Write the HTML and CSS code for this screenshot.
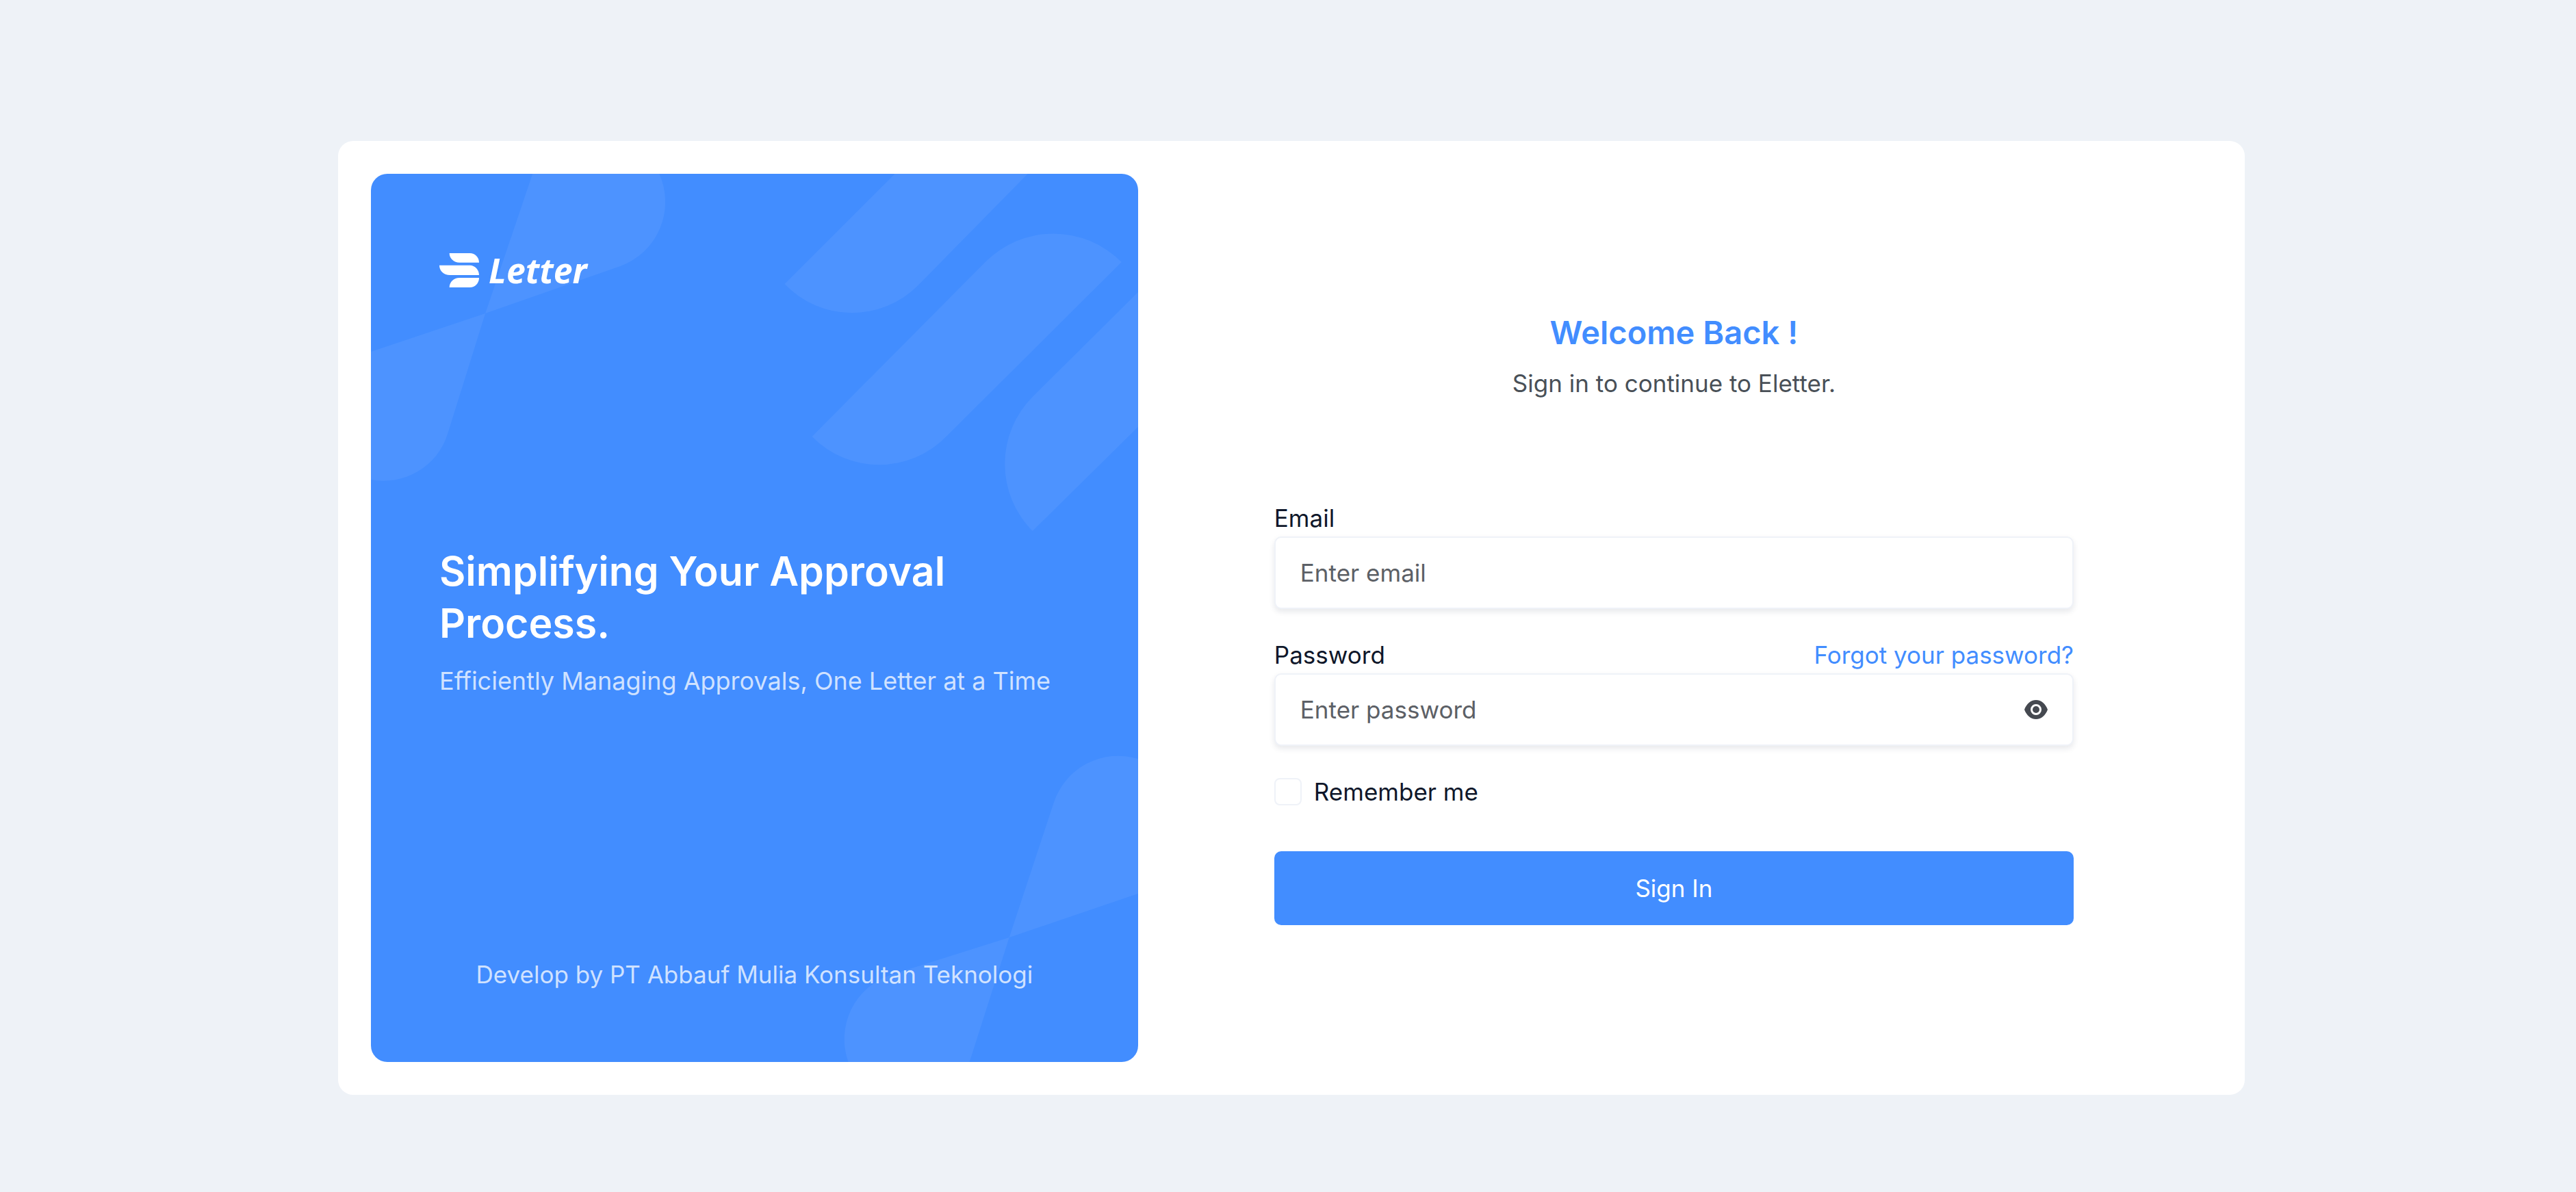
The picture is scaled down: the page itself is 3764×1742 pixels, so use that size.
FILE: index.html
```html
<!DOCTYPE html>
<html lang="en">
<head>
<meta charset="utf-8">
<meta name="viewport" content="width=device-width, initial-scale=1">
<title>Sign In | Eletter</title>
<link rel="stylesheet" href="styles.css">
</head>
<body>
<main class="page">
  <div class="card">
    <section class="promo">
      <svg class="promo-art" viewBox="0 0 1120 1298" preserveAspectRatio="none" aria-hidden="true">
        <path d="M236 0H421A100 100 0 0 1 364 135L167 204Z"/>
        <path d="M0 260L167 204L112 380A98 98 0 0 1 0 447Z"/>
        <path d="M765 0L604 161A136 136 0 0 0 799 163L959 0Z"/>
        <path d="M644 384A137 137 0 0 0 840 384L1096 129A140 140 0 0 0 897 129Z"/>
        <path d="M1120 173L967 325A139 139 0 0 0 966 522L1120 370Z"/>
        <path d="M932 1116L997 919A99 99 0 0 1 1120 855V1052Z"/>
        <path d="M932 1116L758 1171A99 99 0 0 0 697 1298H874Z"/>
      </svg>
      <div class="logo">
        <svg class="logo-mark" viewBox="0 0 174 150" aria-hidden="true">
          <path d="M44 0H134C156 0 174 18 174 41H88C64 41 44 24 44 0Z"/>
          <path d="M0 53H134C156 53 174 73 174 96H46C20 96 0 78 0 53Z"/>
          <path d="M44 150H134C156 150 174 132 174 108H88C64 108 44 126 44 150Z"/>
        </svg>
        <span class="logo-name">Letter</span>
      </div>
      <div class="pitch">
        <h1 class="pitch-title">Simplifying Your Approval Process.</h1>
        <p class="pitch-text">Efficiently Managing Approvals, One Letter at a Time</p>
      </div>
      <p class="credit">Develop by PT Abbauf Mulia Konsultan Teknologi</p>
    </section>
    <section class="signin">
      <header class="welcome">
        <h2 class="welcome-title">Welcome Back !</h2>
        <p class="welcome-text">Sign in to continue to Eletter.</p>
      </header>
      <form class="form">
        <div class="field">
          <div class="field-head"><label for="email">Email</label></div>
          <input class="input" id="email" type="email" placeholder="Enter email">
        </div>
        <div class="field">
          <div class="field-head">
            <label for="password">Password</label>
            <a class="forgot" href="#">Forgot your password?</a>
          </div>
          <div class="password">
            <input class="input" id="password" type="password" placeholder="Enter password">
            <button class="reveal" type="button" aria-label="Show password">
              <svg viewBox="0 0 34 28" aria-hidden="true">
                <path fill-rule="evenodd" d="M17 0C25 0 31 6 34 14C31 22 25 28 17 28C9 28 3 22 0 14C3 6 9 0 17 0ZM17 6A8 8 0 0 0 17 22A8 8 0 0 0 17 6Z"/>
                <circle cx="17" cy="14" r="5"/>
              </svg>
            </button>
          </div>
        </div>
        <div class="remember">
          <input class="check" id="remember" type="checkbox">
          <label for="remember">Remember me</label>
        </div>
        <button class="submit" type="submit">Sign In</button>
      </form>
    </section>
  </div>
</main>
</body>
</html>
```

FILE: styles.css
```css
*, *::before, *::after { box-sizing: border-box; }

body {
  margin: 0;
  background: #eef2f7;
  color: #0f172a;
  font: 400 35px/52px Inter, "Liberation Sans", sans-serif;
}

h1, h2, p { margin: 0; }

.page { padding: 206px 484px 142px 494px; }

.card {
  display: grid;
  grid-template-columns: 5fr 7fr;
  padding: 48px;
  border-radius: 22px;
  background: #fff;
}

/* Blue panel */
.promo {
  position: relative;
  display: flex;
  flex-direction: column;
  justify-content: space-between;
  min-height: 1298px;
  padding: 100px 100px 102px;
  overflow: hidden;
  border-radius: 24px;
  background: #428dff;
  color: #fff;
}

.promo-art {
  position: absolute;
  inset: 0;
  width: 100%;
  height: 100%;
  fill: #fff;
  fill-opacity: .06;
}

.logo, .pitch, .credit { position: relative; }

.logo {
  display: flex;
  align-items: center;
  gap: 14px;
  height: 82px;
}

.logo-mark { width: 58px; height: 50px; fill: #fff; }

.logo-name {
  font: italic 700 50px/72px "Noto Sans", sans-serif;
}

.pitch-title { font-size: 59px; font-weight: 600; line-height: 76px; }
.pitch-text { margin-top: 20px; color: rgba(255, 255, 255, .75); font-size: 36px; }
.credit { margin-top: 16px; color: rgba(255, 255, 255, .75); text-align: center; }

/* Sign-in form */
.signin { padding: 196px 202px 0 199px; }

.welcome { text-align: center; color: #495057; }
.welcome-title { color: #428dff; font-size: 47px; font-weight: 600; line-height: 72px; }
.welcome-text { margin-top: 12px; }

.form { margin-top: 144px; }
.field { margin-bottom: 40px; }
.field-head { display: flex; justify-content: space-between; line-height: 54px; }
.forgot { color: #428dff; text-decoration: none; }

.input {
  display: block;
  width: 100%;
  height: 106px;
  padding: 0 36px;
  border: 2px solid #eff2f8;
  border-radius: 10px;
  background: #fff;
  box-shadow: 0 4px 8px rgba(15, 34, 58, .1);
  color: #495057;
  font: inherit;
}

.input::placeholder { color: #5c6066; opacity: 1; }

.password { display: grid; }
.password > * { grid-area: 1 / 1; }
.password .input { padding-right: 110px; }

.reveal {
  display: flex;
  align-items: center;
  justify-self: end;
  padding: 0 38px;
  border: 0;
  background: none;
}

.reveal svg { width: 34px; height: 28px; fill: #454950; }

.remember { display: flex; align-items: center; gap: 18px; line-height: 54px; }

.check {
  appearance: none;
  width: 40px;
  height: 40px;
  margin: 0;
  border: 2px solid #eff2f8;
  border-radius: 8px;
  background: #fff;
}

.submit {
  display: block;
  width: 100%;
  height: 108px;
  margin-top: 60px;
  border: 0;
  border-radius: 10px;
  background: #428dff;
  color: #fff;
  font: inherit;
}
```
